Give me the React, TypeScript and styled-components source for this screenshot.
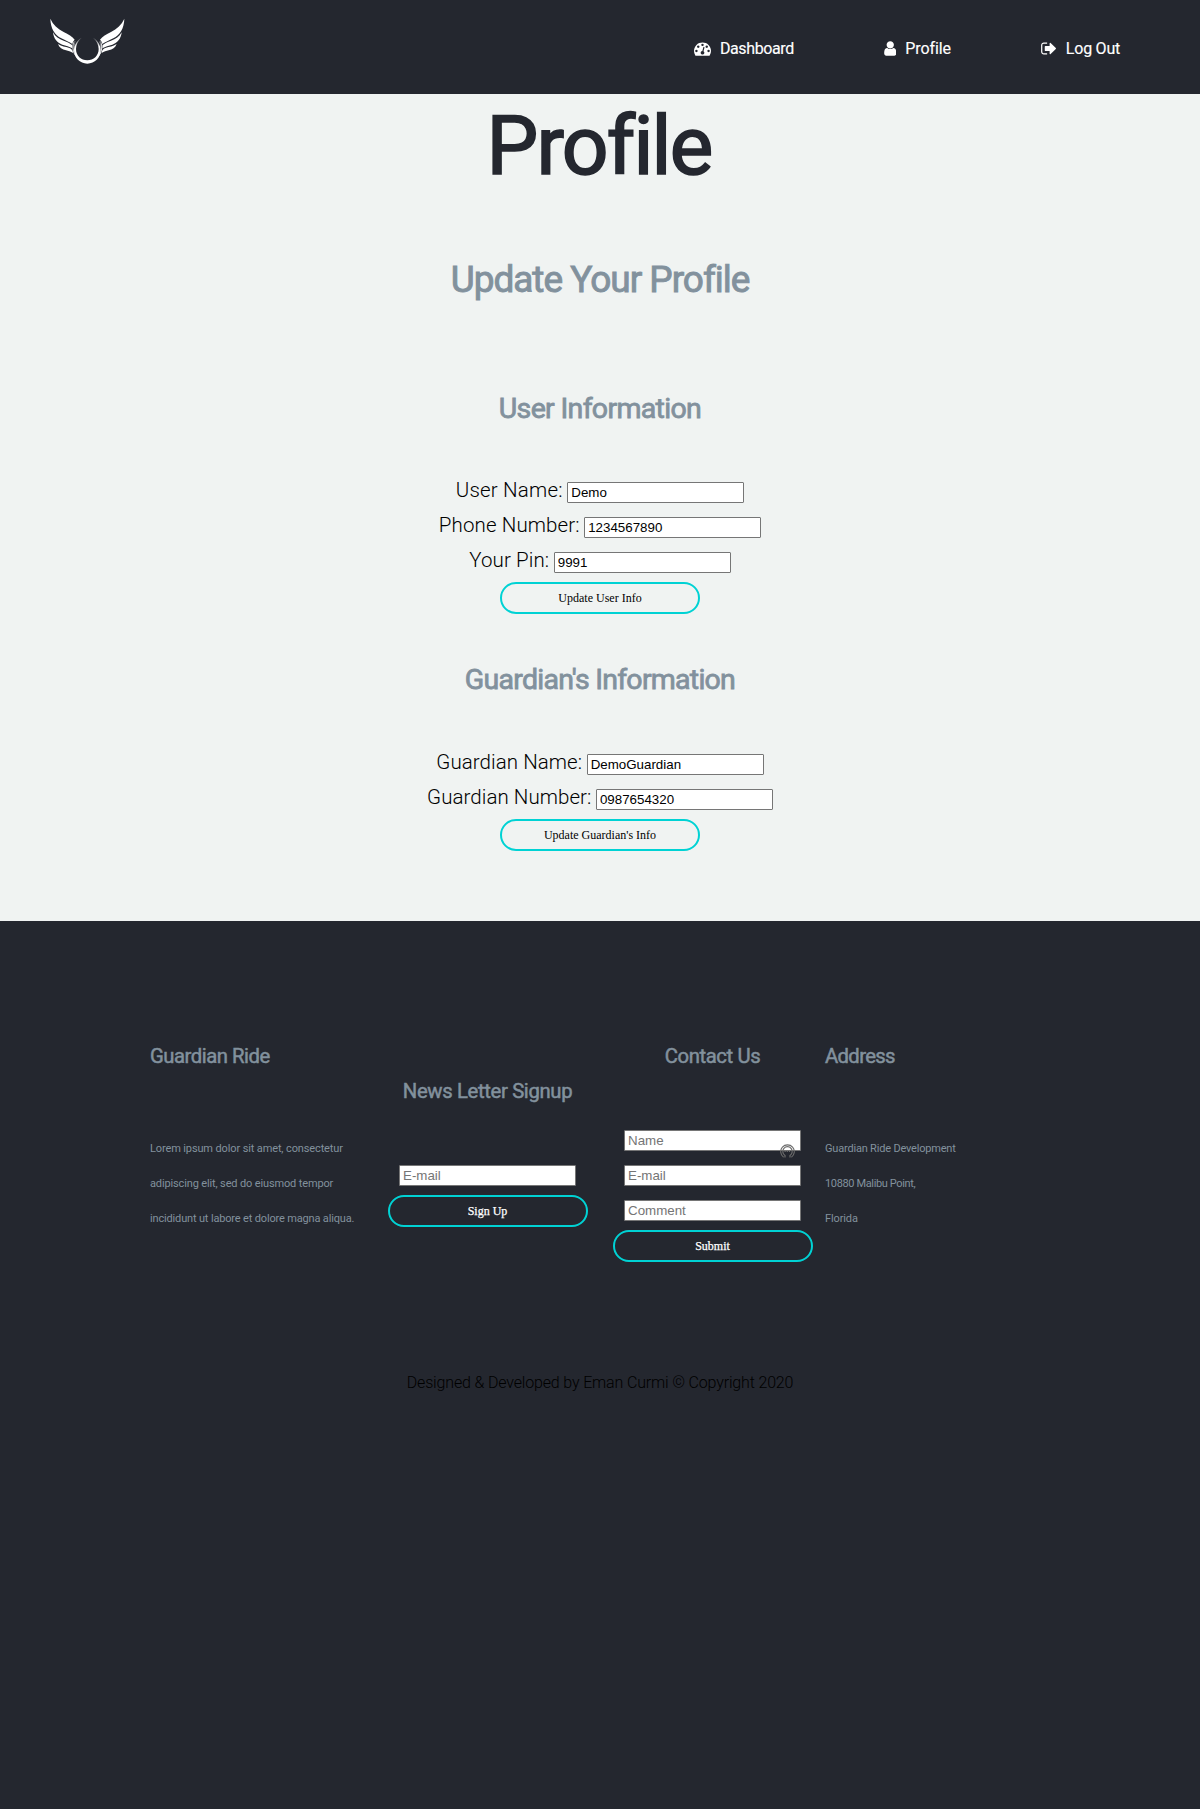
import React from "react";
import styled, { createGlobalStyle } from "styled-components";

const ink = "#24272f";
const paper = "#f0f3f2";
const slate = "#82919d";
const cyan = "#00d2d4";

const GlobalStyle = createGlobalStyle`
  * { box-sizing: border-box; }
  body {
    margin: 0;
    background: ${ink};
    font-family: Roboto, "Liberation Sans", sans-serif;
    font-size: 16px;
    line-height: 35px;
  }
  h1, h2, h3, h4, p { margin: 0; font-weight: 400; }
`;

const Page = styled.div`
  min-height: 1809px;
  background: ${ink};
`;

const Header = styled.header`
  display: flex;
  justify-content: space-between;
  align-items: flex-start;
  height: 94px;
  padding: 0 80px 0 45px;
`;

const Logo = styled.svg`
  width: 84px;
  height: 56px;
  margin-top: 12px;
`;

const Nav = styled.nav`
  display: flex;
  gap: 90px;
  padding-top: 31px;
`;

const NavLink = styled.a<{ $track: number }>`
  display: flex;
  align-items: center;
  gap: 9px;
  color: #fff;
  letter-spacing: ${(p) => p.$track}px;
  -webkit-text-stroke: 0.15px currentColor;
  text-decoration: none;

  svg {
    height: 17px;
    fill: #fff;
  }
`;

const Main = styled.main`
  display: flex;
  flex-direction: column;
  align-items: center;
  padding-bottom: 70px;
  background: ${paper};
`;

const Title = styled.h1`
  padding-right: 2px;
  color: ${ink};
  font-size: 82px;
  line-height: 104px;
  letter-spacing: -1.75px;
  -webkit-text-stroke: 1.7px currentColor;
`;

const Subtitle = styled.h2`
  margin-top: 64px;
  color: ${slate};
  font-size: 37px;
  letter-spacing: -1.02px;
  -webkit-text-stroke: 0.9px currentColor;
`;

const Form = styled.form<{ $top: number }>`
  display: flex;
  flex-direction: column;
  align-items: center;
  margin-top: ${(p) => p.$top}px;
`;

const FormTitle = styled.h3<{ $track: number; $bottom: number }>`
  margin-bottom: ${(p) => p.$bottom}px;
  color: ${slate};
  font-size: 28.5px;
  letter-spacing: ${(p) => p.$track}px;
  -webkit-text-stroke: 0.8px currentColor;
`;

const Field = styled.label<{ $track: number }>`
  display: flex;
  align-items: baseline;
  gap: 4.5px;
  height: 35px;
  color: #000;
  font-size: 20.5px;
  font-weight: 300;
  letter-spacing: ${(p) => p.$track}px;
`;

const Input = styled.input`
  width: 177px;
  height: 21px;
  margin: 0;
  padding: 1px 3px;
  border: 1px solid #767676;
  border-radius: 1px;
  background: #fff;
  color: #000;
  font: 13.333px "Liberation Sans", Arial, sans-serif;
  letter-spacing: 0;

  &::placeholder { color: #757575; }
`;

const Button = styled.button<{ $color: string; $top: number }>`
  width: 200px;
  height: 32px;
  margin: ${(p) => p.$top}px 0 0;
  padding: 0;
  border: 2px solid ${cyan};
  border-radius: 16px;
  background: transparent;
  color: ${(p) => p.$color};
  font: 12px "Liberation Serif", "Times New Roman", serif;
  -webkit-text-stroke: ${(p) => (p.$color === "#fff" ? "0.25px" : "0")} currentColor;
`;

const Footer = styled.footer`
  padding: 118px 150px 0;
`;

const Columns = styled.div`
  display: grid;
  grid-template-columns: repeat(4, 225px);
`;

const TextColumn = styled.section`
  color: ${slate};
`;

const FormColumn = styled.section<{ $drop?: number }>`
  display: flex;
  flex-direction: column;
  align-items: center;
  padding-top: ${(p) => p.$drop ?? 0}px;
`;

const FooterTitle = styled.h4<{ $track: number }>`
  color: ${slate};
  font-size: 20.3px;
  letter-spacing: ${(p) => p.$track}px;
  -webkit-text-stroke: 0.5px currentColor;
`;

const SmallPrint = styled.div`
  margin-top: 57px;
`;

const SmallLine = styled.p<{ $track: number }>`
  font-size: 11px;
  letter-spacing: ${(p) => p.$track}px;
  white-space: nowrap;
`;

const InputStack = styled.div`
  display: flex;
  flex-direction: column;
  gap: 14px;
  margin-top: 56px;
`;

const InputWrap = styled.div`
  position: relative;
  display: flex;
`;

const AutofillBadge = styled.svg`
  position: absolute;
  left: 156px;
  top: 14px;
  width: 15px;
  height: 15px;
`;

const Copyright = styled.p`
  margin-top: 103px;
  color: #000;
  font-weight: 300;
  letter-spacing: -0.16px;
  text-align: center;
`;

const Wing = () => (
  <g fill="#fff">
    <path d="M16 20 C24 38 38 51 56 60 C70 67 82 74 89 83 C85 87 83 91 82 96 C73 90 62 86 49 79 C29 69 17 50 16 20Z" />
    <path d="M24 61 C31 74 42 81 56 86 C67 90 76 94 81 99 L82 109 C73 103 63 102 52 98 C36 92 26 80 24 61Z" />
    <path d="M39 96 C50 104 62 104 71 107 C77 109 81 112 83 117 L84 123 C77 118 70 117 63 115 C52 113 43 107 39 96Z" />
    <path d="M89 86 C84 96 83 119 96 137 C88 130 82 119 82 106 C82 97 84 90 89 86Z" opacity="0.85" />
    <path d="M92 87 C88 94 87 106 89 117 C85 106 86 93 92 87Z" opacity="0.7" />
  </g>
);

const WingsLogo = () => (
  <Logo viewBox="0 0 252 168" aria-label="Guardian Ride">
    <defs>
      <linearGradient id="ringFade" x1="0" y1="74" x2="0" y2="104" gradientUnits="userSpaceOnUse">
        <stop offset="0" stopColor="#fff" stopOpacity="0.1" />
        <stop offset="1" stopColor="#fff" />
      </linearGradient>
    </defs>
    <Wing />
    <g transform="translate(254 0) scale(-1 1)">
      <Wing />
    </g>
    <path
      fill="url(#ringFade)"
      fillRule="evenodd"
      d="M110 77 C96 84 87 99 87 115 C87 137 105 155 127 155 C149 155 167 137 167 115 C167 99 158 84 144 77 C155 86 161 98 161 111 C161 131 146 145 127 145 C108 145 93 131 93 111 C93 98 99 86 110 77Z"
    />
  </Logo>
);

const GaugeIcon = () => (
  <svg width="17" viewBox="0 0 1792 1792">
    <path d="M384 1152q0-53-37.5-90.5t-90.5-37.5-90.5 37.5-37.5 90.5 37.5 90.5 90.5 37.5 90.5-37.5 37.5-90.5zm192-448q0-53-37.5-90.5t-90.5-37.5-90.5 37.5-37.5 90.5 37.5 90.5 90.5 37.5 90.5-37.5 37.5-90.5zm428 481l101-382q6-26-7.5-48.5t-38.5-29.5-48 6.5-30 39.5l-101 382q-60 5-107 43.5t-63 98.5q-20 77 20 146t117 89 146-20 89-117q16-60-6-117t-72-91zm660-33q0-53-37.5-90.5t-90.5-37.5-90.5 37.5-37.5 90.5 37.5 90.5 90.5 37.5 90.5-37.5 37.5-90.5zm-640-640q0-53-37.5-90.5t-90.5-37.5-90.5 37.5-37.5 90.5 37.5 90.5 90.5 37.5 90.5-37.5 37.5-90.5zm448 192q0-53-37.5-90.5t-90.5-37.5-90.5 37.5-37.5 90.5 37.5 90.5 90.5 37.5 90.5-37.5 37.5-90.5zm320 448q0 261-141 483-19 29-54 29h-1402q-35 0-54-29-141-221-141-483 0-182 71-348t191-286 286-191 348-71 348 71 286 191 191 286 71 348z" />
  </svg>
);

const UserIcon = () => (
  <svg width="12.5" viewBox="256 0 1280 1792">
    <path d="M1536 1399q0 109-62.5 187t-150.5 78h-854q-88 0-150.5-78t-62.5-187q0-85 8.5-160.5t31.5-152 58.5-131 94-89 134.5-34.5q131 128 313 128t313-128q76 0 134.5 34.5t94 89 58.5 131 31.5 152 8.5 160.5zm-256-887q0 159-112.5 271.5t-271.5 112.5-271.5-112.5-112.5-271.5 112.5-271.5 271.5-112.5 271.5 112.5 112.5 271.5z" />
  </svg>
);

const SignOutIcon = () => (
  <svg width="16" viewBox="64 0 1664 1792">
    <path d="M704 1440q0 4 1 20t.5 26.5-3 23.5-10 19.5-20.5 6.5h-320q-119 0-203.5-84.5t-84.5-203.5v-704q0-119 84.5-203.5t203.5-84.5h320q13 0 22.5 9.5t9.5 22.5q0 4 1 20t.5 26.5-3 23.5-10 19.5-20.5 6.5h-320q-66 0-113 47t-47 113v704q0 66 47 113t113 47h312l11.5 1 11.5 3 8 5.5 7 9 2 13.5zm928-544q0 26-19 45l-544 544q-19 19-45 19t-45-19-19-45v-288h-448q-26 0-45-19t-19-45v-384q0-26 19-45t45-19h448v-288q0-26 19-45t45-19 45 19l544 544q19 19 19 45z" />
  </svg>
);

const KeyBadge = () => (
  <AutofillBadge viewBox="0 0 15 15" fill="none" stroke="#6b6b6b">
    <path d="M3.6 13.2 A6.8 6.8 0 1 1 11.4 13.2" strokeWidth="1.1" />
    <path d="M5 13.4 V11.4 A4.7 4.7 0 1 1 10 11.4 V13.4" strokeWidth="1.2" />
    <path d="M4.5 7.3 H10.5" strokeWidth="1.2" strokeDasharray="1.2 1" />
  </AutofillBadge>
);

export default function App() {
  return (
    <Page>
      <GlobalStyle />
      <Header>
        <WingsLogo />
        <Nav>
          <NavLink $track={-0.38}><GaugeIcon />Dashboard</NavLink>
          <NavLink $track={-0.12}><UserIcon />Profile</NavLink>
          <NavLink $track={-0.23}><SignOutIcon />Log Out</NavLink>
        </Nav>
      </Header>

      <Main>
        <Title>Profile</Title>
        <Subtitle>Update Your Profile</Subtitle>

        <Form $top={94}>
          <FormTitle $track={-0.67} $bottom={47}>User Information</FormTitle>
          <Field $track={0.2}>User Name:<Input defaultValue="Demo" /></Field>
          <Field $track={0.115}>Phone Number:<Input defaultValue="1234567890" /></Field>
          <Field $track={0.1}>Your Pin:<Input defaultValue="9991" /></Field>
          <Button type="button" $color="#000" $top={4}>Update User Info</Button>
        </Form>

        <Form $top={48}>
          <FormTitle $track={-0.74} $bottom={48}>Guardian's Information</FormTitle>
          <Field $track={0.07}>Guardian Name:<Input defaultValue="DemoGuardian" /></Field>
          <Field $track={0.06}>Guardian Number:<Input defaultValue="0987654320" /></Field>
          <Button type="button" $color="#000" $top={4}>Update Guardian's Info</Button>
        </Form>
      </Main>

      <Footer>
        <Columns>
          <TextColumn>
            <FooterTitle $track={-0.48}>Guardian Ride</FooterTitle>
            <SmallPrint>
              <SmallLine $track={-0.125}>Lorem ipsum dolor sit amet, consectetur</SmallLine>
              <SmallLine $track={-0.14}>adipiscing elit, sed do eiusmod tempor</SmallLine>
              <SmallLine $track={-0.16}>incididunt ut labore et dolore magna aliqua.</SmallLine>
            </SmallPrint>
          </TextColumn>

          <FormColumn $drop={35}>
            <FooterTitle $track={-0.35}>News Letter Signup</FooterTitle>
            <InputStack>
              <Input placeholder="E-mail" />
            </InputStack>
            <Button type="button" $color="#fff" $top={9}>Sign Up</Button>
          </FormColumn>

          <FormColumn>
            <FooterTitle $track={-0.38}>Contact Us</FooterTitle>
            <InputStack>
              <InputWrap>
                <Input placeholder="Name" />
                <KeyBadge />
              </InputWrap>
              <Input placeholder="E-mail" />
              <Input placeholder="Comment" />
            </InputStack>
            <Button type="button" $color="#fff" $top={9}>Submit</Button>
          </FormColumn>

          <TextColumn>
            <FooterTitle $track={-0.65}>Address</FooterTitle>
            <SmallPrint>
              <SmallLine $track={-0.19}>Guardian Ride Development</SmallLine>
              <SmallLine $track={-0.36}>10880 Malibu Point,</SmallLine>
              <SmallLine $track={-0.12}>Florida</SmallLine>
            </SmallPrint>
          </TextColumn>
        </Columns>
        <Copyright>Designed &amp; Developed by Eman Curmi © Copyright 2020</Copyright>
      </Footer>
    </Page>
  );
}
